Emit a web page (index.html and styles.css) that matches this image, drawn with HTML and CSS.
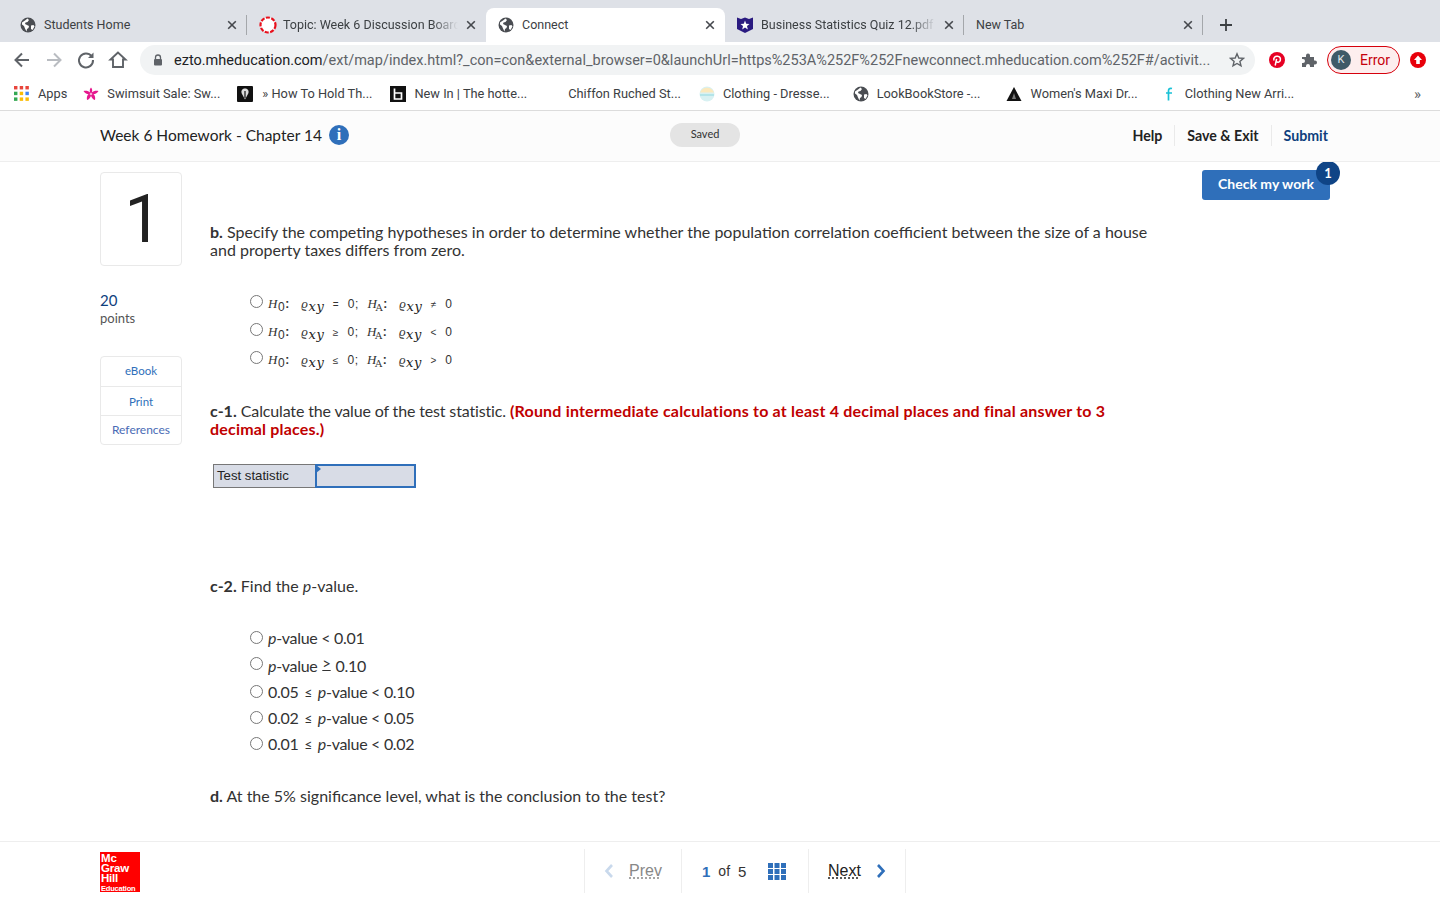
FILE: index.html
```html
<!DOCTYPE html>
<html lang="en">
<head>
    <meta charset="UTF-8">
    <meta name="viewport" content="width=device-width, initial-scale=1.0">
    <title>Connect</title>
    <link rel="stylesheet" href="styles.css">
</head>
<body>
    <svg class="defs" width="0" height="0">
        <symbol id="globe" viewBox="0 0 16 16">
            <circle cx="8" cy="8" r="7.5" fill="#4a4d52"/>
            <path d="M2 5.5 5 3.5 7.5 1.5 9 3 7.5 5 5.5 5.5 5 7 7 8 9 9 8.5 11 7 12 6.5 14.5 5 11.5 4 9 2 7.5Z" fill="#fff"/>
            <path d="M11 8.5 13.5 8 14.5 9.5 12.5 13 11 12Z" fill="#fff"/>
        </symbol>
        <symbol id="close" viewBox="0 0 10 10">
            <path d="M1.2 1.2 8.8 8.8M8.8 1.2 1.2 8.8" stroke="#45484d" stroke-width="1.6" fill="none"/>
        </symbol>
    </svg>

    <div class="tabs">
        <div class="tab">
            <svg class="favicon"><use href="#globe"/></svg>
            <span class="tab-title">Students Home</span>
            <svg class="tab-close"><use href="#close"/></svg>
        </div>
        <div class="tab tab-line">
            <svg class="favicon favicon-big" viewBox="0 0 18 18"><circle cx="9" cy="9" r="7.5" fill="#fff" stroke="#e8101c" stroke-width="2.2" stroke-dasharray="4 1.5"/></svg>
            <span class="tab-title tab-fade">Topic: Week 6 Discussion Board</span>
            <svg class="tab-close"><use href="#close"/></svg>
        </div>
        <div class="tab tab-active">
            <svg class="favicon"><use href="#globe"/></svg>
            <span class="tab-title">Connect</span>
            <svg class="tab-close"><use href="#close"/></svg>
        </div>
        <div class="tab">
            <svg class="favicon" viewBox="0 0 16 16"><path d="M0 .5 4 2 8 .5 12 2 16 .5V12L8 16 0 12Z" fill="#2a1a80"/><path d="M8 3.500 9.200 6.800 12.500 7 10 9.100 10.800 12.400 8 10.600 5.200 12.400 6 9.100 3.500 7 6.800 6.800Z" fill="#fff"/></svg>
            <span class="tab-title tab-fade">Business Statistics Quiz 12.pdf</span>
            <svg class="tab-close"><use href="#close"/></svg>
        </div>
        <div class="tab tab-line tab-plain">
            <span class="tab-title">New Tab</span>
            <svg class="tab-close"><use href="#close"/></svg>
        </div>
        <div class="tab-new">
            <svg width="14" height="14" viewBox="0 0 14 14"><path d="M7 1V13M1 7H13" stroke="#3c4043" stroke-width="1.8"/></svg>
        </div>
    </div>

    <div class="toolbar">
        <svg class="nav-icon" viewBox="0 0 20 20"><path d="M17 10H4M10 3.5 3.5 10 10 16.5" fill="none" stroke="#5f6368" stroke-width="2"/></svg>
        <svg class="nav-icon" viewBox="0 0 20 20"><path d="M3 10H16M10 3.5 16.5 10 10 16.5" fill="none" stroke="#b9bcc1" stroke-width="2"/></svg>
        <svg class="nav-icon" viewBox="0 0 20 20"><path d="M15.6 6.2A7 7 0 1 0 17 10" fill="none" stroke="#5f6368" stroke-width="2"/><path d="M17.5 2.5V8H12Z" fill="#5f6368"/></svg>
        <svg class="nav-icon" viewBox="0 0 20 20"><path d="M10 2.5 2.5 9.5H5V17H15V9.5H17.5Z" fill="none" stroke="#5f6368" stroke-width="1.9"/></svg>
        <div class="omnibox">
            <svg class="lock" width="10" height="12" viewBox="0 0 10 12"><path d="M2.5 5V3.5a2.5 2.5 0 0 1 5 0V5" fill="none" stroke="#5f6368" stroke-width="1.3"/><rect x="1" y="5" width="8" height="6.5" rx="1" fill="#5f6368"/></svg>
            <span class="url"><span class="url-host">ezto.mheducation.com</span>/ext/map/index.html?_con=con&amp;external_browser=0&amp;launchUrl=https%253A%252F%252Fnewconnect.mheducation.com%252F#/activit...</span>
            <svg class="star" width="16" height="16" viewBox="0 0 16 16"><path d="M8 1.8 9.8 6 14.4 6.4 10.9 9.4 12 13.9 8 11.5 4 13.9 5.1 9.4 1.6 6.4 6.2 6Z" fill="none" stroke="#5f6368" stroke-width="1.4"/></svg>
        </div>
        <svg class="ext-icon" width="16" height="16" viewBox="0 0 16 16"><circle cx="8" cy="8" r="8" fill="#e60023"/><path d="M6.2 13.5 7.6 6.8M5 8.6C4 5.8 6.200 4 8.400 4.200 10.800 4.400 11.800 6.200 11.300 8.200 10.800 10.200 8.800 10.800 7.400 9.600" fill="none" stroke="#fff" stroke-width="1.500"/></svg>
        <svg class="ext-icon puzzle" width="16" height="16" viewBox="0 0 16 16"><path d="M1 5H5V3.500a2 2 0 0 1 4 0V5H13V8.500H14a2 2 0 0 1 0 4H13V15H9V14a2 2 0 0 0-4 0V15H1V11H2a2 2 0 0 0 0-4H1Z" fill="#5f6368"/></svg>
        <div class="profile">
            <span class="avatar">K</span>
            <span class="profile-label">Error</span>
        </div>
        <svg class="ext-icon ext-last" width="16" height="16" viewBox="0 0 16 16"><circle cx="8" cy="8" r="8" fill="#e8000b"/><path d="M8 3.500 12 8H9.800V12H6.200V8H4Z" fill="#fff"/></svg>
    </div>

    <div class="bookmarks">
        <div class="bm bm-apps">
            <svg class="bm-icon" viewBox="0 0 14 14">
                <rect width="3" height="3" fill="#e8453c"/><rect x="5" width="3" height="3" fill="#e8453c"/><rect x="10" width="3" height="3" fill="#e8453c"/>
                <rect y="5" width="3" height="3" fill="#34a853"/><rect x="5" y="5" width="3" height="3" fill="#fbbc05"/><rect x="10" y="5" width="3" height="3" fill="#4285f4"/>
                <rect y="10" width="3" height="3" fill="#34a853"/><rect x="5" y="10" width="3" height="3" fill="#fbbc05"/><rect x="10" y="10" width="3" height="3" fill="#fbbc05"/>
            </svg>
            <span>Apps</span>
        </div>
        <div class="bm bm-swim">
            <svg class="bm-icon" viewBox="0 0 16 16"><path d="M8 1.500C9.500 3 9.500 5 8.800 6.500 10.500 4.800 13 4.500 15.500 5 14.500 7 12.500 8 10.500 8.200 12 9.500 12.500 11.500 12 14 10 13.500 8.800 11.500 8 10 7.200 11.500 6 13.500 4 14 3.500 11.500 4 9.500 5.500 8.200 3.500 8 1.500 7 .5 5 3 4.500 5.500 4.800 7.200 6.500 6.500 5 6.500 3 8 1.500Z" fill="#e6178e"/><circle cx="8" cy="8" r="1.300" fill="#f7a6d4"/></svg>
            <span>Swimsuit Sale: Sw...</span>
        </div>
        <div class="bm bm-hold">
            <svg class="bm-icon" viewBox="0 0 16 16"><rect width="16" height="16" rx="1" fill="#111"/><path d="M8 2.500C11 2.500 12.500 5 11 8L8 13.500 5 8C3.500 5 5 2.500 8 2.500Z" fill="#ddd"/><path d="M8 5V12" stroke="#111" stroke-width="1.200"/></svg>
            <span>» How To Hold Th...</span>
        </div>
        <div class="bm bm-new">
            <svg class="bm-icon" viewBox="0 0 16 16"><rect width="16" height="16" fill="#111"/><path d="M4.500 2.500V13H11.500V7H4.500" fill="none" stroke="#fff" stroke-width="1.700"/></svg>
            <span>New In | The hotte...</span>
        </div>
        <div class="bm bm-chiffon">
            <span class="bm-icon"></span>
            <span>Chiffon Ruched St...</span>
        </div>
        <div class="bm bm-cloth">
            <svg class="bm-icon" viewBox="0 0 16 16"><circle cx="8" cy="8" r="7.500" fill="#d8f1f2"/><path d="M1 6.500H15A7.500 7.500 0 0 0 1 6.500Z" fill="#fbe9bd"/><path d="M1 9H15" stroke="#8fd8df"/></svg>
            <span>Clothing - Dresse...</span>
        </div>
        <div class="bm bm-look">
            <svg class="bm-icon"><use href="#globe"/></svg>
            <span>LookBookStore -...</span>
        </div>
        <div class="bm bm-maxi">
            <svg class="bm-icon" viewBox="0 0 16 16"><path d="M8 1 15.500 15H.5Z" fill="#111"/><path d="M8 7 10 13H6Z" fill="#777"/></svg>
            <span>Women's Maxi Dr...</span>
        </div>
        <div class="bm bm-arri">
            <svg class="bm-icon" viewBox="0 0 16 16"><path d="M11 2.500C8.500 1.800 7.500 3 7.500 5V14.500M5 7H11" fill="none" stroke="#18c1d6" stroke-width="1.700"/></svg>
            <span>Clothing New Arri...</span>
        </div>
        <span class="bm-more">»</span>
    </div>

    <header class="page-header">
        <div class="header-left">
            <span class="hw-title">Week 6 Homework - Chapter 14</span>
            <span class="info-icon">i</span>
        </div>
        <span class="saved">Saved</span>
        <div class="header-links">
            <a class="header-link">Help</a>
            <a class="header-link">Save &amp; Exit</a>
            <a class="header-link header-submit">Submit</a>
        </div>
    </header>

    <main class="main">
        <aside class="side">
            <div class="q-number">1</div>
            <div class="points-num">20</div>
            <div class="points-label">points</div>
            <div class="side-links">
                <a class="side-link">eBook</a>
                <a class="side-link side-link-print">Print</a>
                <a class="side-link side-link-ref">References</a>
            </div>
        </aside>

        <section class="question">
            <p class="q-text q-b"><b>b.</b> Specify the competing hypotheses in order to determine whether the population correlation coefficient between the size of a house and property taxes differs from zero.</p>

            <div class="math-options">
                <label class="math-option">
                    <input type="radio" name="hyp">
                    <span class="math"><i>H</i><sub>0</sub><b>:</b> <i>ϱ</i><sub class="xy">xy</sub> <small>=</small> 0; <i>H</i><sub class="ha">A</sub><b>:</b> <i>ϱ</i><sub class="xy">xy</sub> <small>≠</small> 0</span>
                </label>
                <label class="math-option">
                    <input type="radio" name="hyp">
                    <span class="math"><i>H</i><sub>0</sub><b>:</b> <i>ϱ</i><sub class="xy">xy</sub> <small>≥</small> 0; <i>H</i><sub class="ha">A</sub><b>:</b> <i>ϱ</i><sub class="xy">xy</sub> <small>&lt;</small> 0</span>
                </label>
                <label class="math-option">
                    <input type="radio" name="hyp">
                    <span class="math"><i>H</i><sub>0</sub><b>:</b> <i>ϱ</i><sub class="xy">xy</sub> <small>≤</small> 0; <i>H</i><sub class="ha">A</sub><b>:</b> <i>ϱ</i><sub class="xy">xy</sub> <small>&gt;</small> 0</span>
                </label>
            </div>

            <p class="q-text q-c1"><b>c-1.</b> <span class="c1-plain">Calculate the value of the test statistic.</span> <b class="red">(Round intermediate calculations to at least 4 decimal places and final answer to 3 decimal places.)</b></p>

            <div class="stat-table">
                <div class="stat-label">Test statistic</div>
                <div class="stat-input"></div>
            </div>

            <p class="q-text q-c2"><b>c-2.</b> Find the <i>p</i>-value.</p>

            <div class="p-options">
                <label class="p-option"><input type="radio" name="pval"><span><i>p</i>-value &lt; 0.01</span></label>
                <label class="p-option p-option-ge"><input type="radio" name="pval"><span><i>p</i>-value <u class="ge">&gt;</u> 0.10</span></label>
                <label class="p-option"><input type="radio" name="pval"><span>0.05 <span class="le">≤</span> <i>p</i>-value &lt; 0.10</span></label>
                <label class="p-option"><input type="radio" name="pval"><span>0.02 <span class="le">≤</span> <i>p</i>-value &lt; 0.05</span></label>
                <label class="p-option"><input type="radio" name="pval"><span>0.01 <span class="le">≤</span> <i>p</i>-value &lt; 0.02</span></label>
            </div>

            <p class="q-text q-d"><b>d.</b> At the 5% significance level, what is the conclusion to the test?</p>
        </section>

        <div class="check-wrap">
            <button class="check-btn">Check my work</button>
            <span class="check-badge">1</span>
        </div>
    </main>

    <footer class="page-footer">
        <div class="logo">Mc<br>Graw<br>Hill<br><span class="logo-small">Education</span></div>
        <nav class="pager">
            <div class="pager-cell pager-prev">
                <svg width="12" height="16" viewBox="0 0 12 16"><path d="M9 2 3.500 8 9 14" fill="none" stroke="#c9d9ec" stroke-width="2.600"/></svg>
                <span class="pager-word">Prev</span>
            </div>
            <div class="pager-cell pager-mid">
                <span class="page-now">1</span><span class="page-of">of</span><span class="page-total">5</span>
                <svg class="grid-icon" width="18" height="17" viewBox="0 0 18 17">
                    <rect width="5" height="5" fill="#2f6fba"/><rect x="6.500" width="5" height="5" fill="#2f6fba"/><rect x="13" width="5" height="5" fill="#2f6fba"/>
                    <rect y="6" width="5" height="5" fill="#2f6fba"/><rect x="6.500" y="6" width="5" height="5" fill="#2f6fba"/><rect x="13" y="6" width="5" height="5" fill="#2f6fba"/>
                    <rect y="12" width="5" height="5" fill="#2f6fba"/><rect x="6.500" y="12" width="5" height="5" fill="#2f6fba"/><rect x="13" y="12" width="5" height="5" fill="#2f6fba"/>
                </svg>
            </div>
            <div class="pager-cell pager-next">
                <span class="pager-word">Next</span>
                <svg width="12" height="16" viewBox="0 0 12 16"><path d="M3 2 8.500 8 3 14" fill="none" stroke="#2f6fba" stroke-width="2.600"/></svg>
            </div>
        </nav>
    </footer>
</body>
</html>
```

FILE: styles.css
```css
* {
    margin: 0;
    padding: 0;
    box-sizing: border-box;
}
body {
    height: 100vh;
    overflow: hidden;
    display: flex;
    flex-direction: column;
    background: #fff;
    color: #333;
    font-family: Lato, "Open Sans", sans-serif;
}
.defs {
    position: absolute;
}

/* browser chrome */
.tabs {
    display: flex;
    align-items: flex-end;
    height: 42px;
    padding-left: 8px;
    background: #dee1e7;
    font-family: Roboto, sans-serif;
    font-size: 12.5px;
    color: #3c4043;
    flex: none;
}
.tab {
    position: relative;
    display: flex;
    align-items: center;
    width: 239px;
    height: 34px;
    padding: 0 10px 1px 12px;
}
.tab-line::before {
    content: "";
    position: absolute;
    left: -1px;
    top: 7px;
    height: 20px;
    border-left: 1px solid #a4a7ab;
}
.tab-active {
    background: #fff;
    border-radius: 8px 8px 0 0;
}
.tab-plain {
    padding-left: 12px;
}
.favicon {
    width: 16px;
    height: 16px;
    flex: none;
    margin-right: 8px;
}
.favicon-big {
    width: 18px;
    height: 18px;
    margin-right: 6px;
}
.tab-title {
    flex: 1;
    white-space: nowrap;
    overflow: hidden;
}
.tab-fade {
    -webkit-mask-image: linear-gradient(to right, #000 85%, transparent 100%);
    mask-image: linear-gradient(to right, #000 85%, transparent 100%);
}
.tab-close {
    width: 10px;
    height: 10px;
    flex: none;
    margin-left: 8px;
}
.tab-new {
    position: relative;
    display: flex;
    align-items: center;
    height: 34px;
    padding: 0 0 1px 16px;
}
.tab-new::before {
    content: "";
    position: absolute;
    left: -1px;
    top: 7px;
    height: 20px;
    border-left: 1px solid #a4a7ab;
}
.toolbar {
    display: flex;
    align-items: center;
    height: 35px;
    padding-left: 12px;
    background: #fff;
    flex: none;
}
.nav-icon {
    width: 20px;
    height: 20px;
    margin-right: 12px;
    flex: none;
}
.omnibox {
    display: flex;
    align-items: center;
    width: 1115px;
    height: 30px;
    padding: 0 10px 0 13px;
    background: #f1f3f4;
    border-radius: 15px;
    font-family: Roboto, sans-serif;
    font-size: 14.5px;
    color: #5f6368;
}
.lock {
    flex: none;
    margin-right: 11px;
}
.url {
    flex: 1;
    padding-top: 2px;
    white-space: nowrap;
    overflow: hidden;
}
.url-host {
    color: #202124;
}
.star {
    flex: none;
}
.ext-icon {
    flex: none;
    margin-left: 14px;
}
.puzzle {
    margin-left: 16px;
}
.ext-last {
    margin-left: 10px;
}
.profile {
    display: flex;
    align-items: center;
    width: 73px;
    height: 28px;
    margin-left: 10px;
    padding-left: 3px;
    border: 1px solid #d6000c;
    border-radius: 14px;
    background: #fdeeee;
    font-family: Roboto, sans-serif;
    font-size: 14px;
    color: #c5000b;
}
.avatar {
    width: 20px;
    height: 20px;
    border-radius: 50%;
    background: #3f5a67;
    color: #e4e8ea;
    font-size: 11px;
    display: flex;
    align-items: center;
    justify-content: center;
    margin-right: 9px;
}
.bookmarks {
    position: relative;
    display: flex;
    align-items: center;
    height: 34px;
    background: #fff;
    border-bottom: 1px solid #dcdcdc;
    font-family: Roboto, sans-serif;
    font-size: 12.8px;
    color: #3c4043;
    flex: none;
}
.bm {
    display: flex;
    align-items: center;
    white-space: nowrap;
}
.bm-icon {
    width: 16px;
    height: 16px;
    margin-right: 8px;
    flex: none;
}
.bm-apps { margin-left: 14px; }
.bm-swim { margin-left: 16px; }
.bm-hold { margin-left: 17px; }
.bm-hold .bm-icon { margin-right: 9px; }
.bm-new { margin-left: 18px; }
.bm-chiffon { margin-left: 17px; }
.bm-cloth { margin-left: 18px; }
.bm-look { margin-left: 23px; }
.bm-maxi { margin-left: 26px; }
.bm-arri { margin-left: 23px; }
.bm-more {
    margin-left: auto;
    margin-right: 19px;
    font-size: 15px;
    color: #5f6368;
}

/* assignment header */
.page-header {
    position: relative;
    display: flex;
    align-items: center;
    justify-content: space-between;
    height: 51px;
    padding: 0 100px 2px;
    flex: none;
    background: #fcfcfc;
    border-bottom: 1px solid #eee;
}
.header-left {
    display: flex;
    align-items: center;
    gap: 7px;
    font-size: 15.5px;
    color: #222;
}
.info-icon {
    width: 20px;
    height: 20px;
    border-radius: 50%;
    background: #2f6fba;
    color: #fff;
    font-family: "Liberation Serif", serif;
    font-weight: bold;
    font-size: 16px;
    display: flex;
    align-items: center;
    justify-content: center;
}
.saved {
    position: absolute;
    left: 670px;
    top: 12px;
    width: 70px;
    height: 24px;
    border-radius: 12px;
    background: #e4e4e4;
    font-size: 11px;
    line-height: 22px;
    text-align: center;
    color: #333;
}
.header-links {
    display: flex;
    align-items: center;
    margin-right: 12px;
}
.header-link {
    font-size: 14.2px;
    font-weight: bold;
    color: #222;
    padding: 2px 12px;
    border-right: 1px solid #eaeaea;
}
.header-link:last-child {
    border-right: none;
    padding-right: 0;
}
.header-submit {
    color: #0f3f7d;
}

/* question area */
.main {
    flex: 1;
    min-height: 0;
    overflow: hidden;
    display: flex;
    padding-left: 100px;
}
.side {
    width: 82px;
    flex: none;
    padding-top: 10px;
}
.q-number {
    height: 94px;
    padding-left: 4px;
    border: 1px solid #e9e9e9;
    border-radius: 4px;
    font-family: Roboto, sans-serif;
    font-size: 66px;
    font-weight: 400;
    line-height: 94px;
    text-align: center;
    color: #222;
}
.points-num {
    margin-top: 25px;
    font-size: 15px;
    line-height: 18px;
    color: #0f3f7d;
}
.points-label {
    font-size: 13px;
    line-height: 18px;
    color: #555;
}
.side-links {
    margin-top: 29px;
    border: 1px solid #e9e9e9;
    border-radius: 4px;
}
.side-link {
    display: block;
    height: 30px;
    font-size: 11.5px;
    line-height: 28px;
    text-align: center;
    color: #2f6fba;
    border-bottom: 1px solid #e9e9e9;
}
.side-link-print {
    height: 29px;
    line-height: 30px;
}
.side-link-ref {
    height: 28px;
    font-size: 12px;
    line-height: 28px;
    border-bottom: none;
    color: #4a6bb5;
}
.question {
    width: 940px;
    flex: none;
    margin-left: 28px;
}
.q-text {
    font-size: 16px;
    line-height: 18px;
    color: #333;
}
.q-text b {
    color: #333;
}
.q-b {
    margin-top: 61px;
}
.q-text .red {
    color: #c00000;
    letter-spacing: 0.19px;
}
.c1-plain {
    letter-spacing: -0.15px;
}
.math-options {
    margin-top: 30px;
    margin-left: 40px;
}
.math-option {
    display: flex;
    align-items: center;
    height: 28px;
}
.math-option input,
.p-option input {
    appearance: none;
    width: 13px;
    height: 13px;
    margin-right: 5px;
    border: 1px solid #777;
    border-radius: 50%;
    background: #fff;
    flex: none;
    position: relative;
    top: -2px;
}
.math {
    position: relative;
    top: 1px;
    font-family: "Liberation Sans", sans-serif;
    font-size: 12px;
    letter-spacing: 0.6px;
    word-spacing: 4.5px;
    color: #333;
    white-space: pre;
}
.math i {
    font-family: "Liberation Serif", serif;
    font-size: 13px;
}
.math b {
    margin-right: 3px;
}
.math sub {
    font-size: 12px;
    line-height: 0;
}
.math .xy {
    font-family: "DejaVu Serif", serif;
    font-style: italic;
    font-size: 13px;
    color: #222;
}
.math .ha {
    font-family: "DejaVu Serif", serif;
    font-size: 10px;
    margin-left: -2px;
}
.math small {
    font-size: 10px;
}
.q-c1 {
    margin-top: 29px;
}
.stat-table {
    display: flex;
    width: 203px;
    height: 24px;
    margin-top: 26px;
    margin-left: 3px;
    font-family: "Liberation Sans", sans-serif;
    font-size: 13.2px;
    color: #222;
    background: #d8dce6;
}
.stat-label {
    width: 102px;
    padding-left: 3px;
    line-height: 22px;
    border: 1px solid #777;
    border-right: none;
}
.stat-input {
    position: relative;
    flex: 1;
    border: 2px solid #2f6fba;
}
.stat-input::before {
    content: "";
    position: absolute;
    left: -1px;
    top: -1px;
    border-top: 4px solid transparent;
    border-bottom: 4px solid transparent;
    border-left: 5px solid #2f6fba;
}
.q-c2 {
    margin-top: 89px;
}
.p-options {
    margin-top: 29px;
    margin-left: 40px;
}
.p-option {
    display: flex;
    align-items: center;
    height: 26px;
    font-size: 16px;
    letter-spacing: -0.3px;
    color: #333;
}
.p-option input {
    top: 0;
}
.p-option-ge {
    height: 28px;
    padding-top: 2px;
}
.p-option-ge input {
    top: -2px;
}
.ge {
    font-size: 15px;
    position: relative;
    top: -3px;
    margin: 0 1px;
}
.le {
    font-size: 14px;
    margin: 0 2px;
}
.q-d {
    margin-top: 31px;
}
.check-wrap {
    position: relative;
    margin-left: 52px;
    margin-top: 8px;
    height: 30px;
}
.check-btn {
    width: 128px;
    height: 30px;
    padding-bottom: 3px;
    border: none;
    border-radius: 3px;
    background: #2f6fba;
    color: #fff;
    font-family: Lato, sans-serif;
    font-size: 14px;
    font-weight: bold;
}
.check-badge {
    position: absolute;
    right: -10px;
    top: -9px;
    width: 24px;
    height: 24px;
    border-radius: 50%;
    background: #0f4486;
    color: #fff;
    font-size: 13px;
    font-weight: bold;
    line-height: 24px;
    text-align: center;
}

/* footer */
.page-footer {
    display: flex;
    align-items: center;
    height: 59px;
    flex: none;
    padding-left: 100px;
    background: #fff;
    border-top: 1px solid #eee;
    position: relative;
}
.logo {
    width: 40px;
    height: 40px;
    margin-top: 2px;
    background: #f00;
    color: #fff;
    font-family: "Liberation Sans", sans-serif;
    font-weight: bold;
    font-size: 11.5px;
    letter-spacing: -0.2px;
    line-height: 10px;
    padding: 1px 0 0 1px;
    overflow: hidden;
}
.logo-small {
    position: relative;
    top: -1px;
    font-size: 7.5px;
}
.pager {
    display: flex;
    height: 44px;
    margin-left: 444px;
    border-left: 1px solid #eee;
}
.pager-cell {
    display: flex;
    align-items: center;
    height: 44px;
    border-right: 1px solid #eee;
    font-family: "Liberation Sans", sans-serif;
    font-size: 16px;
}
.pager-prev {
    width: 97px;
    padding-left: 18px;
    gap: 14px;
    color: #888;
}
.pager-mid {
    width: 127px;
    padding-left: 20px;
}
.pager-next {
    width: 97px;
    padding-left: 19px;
    gap: 14px;
    color: #222;
}
.pager-word {
    text-decoration: underline dotted;
    text-underline-offset: 2px;
}
.page-now {
    color: #2f6fba;
    font-weight: bold;
    font-size: 15px;
}
.page-of {
    font-size: 14px;
    margin: 0 8px;
    color: #333;
}
.page-total {
    color: #333;
    font-size: 15px;
}
.grid-icon {
    margin-left: 22px;
}
```
